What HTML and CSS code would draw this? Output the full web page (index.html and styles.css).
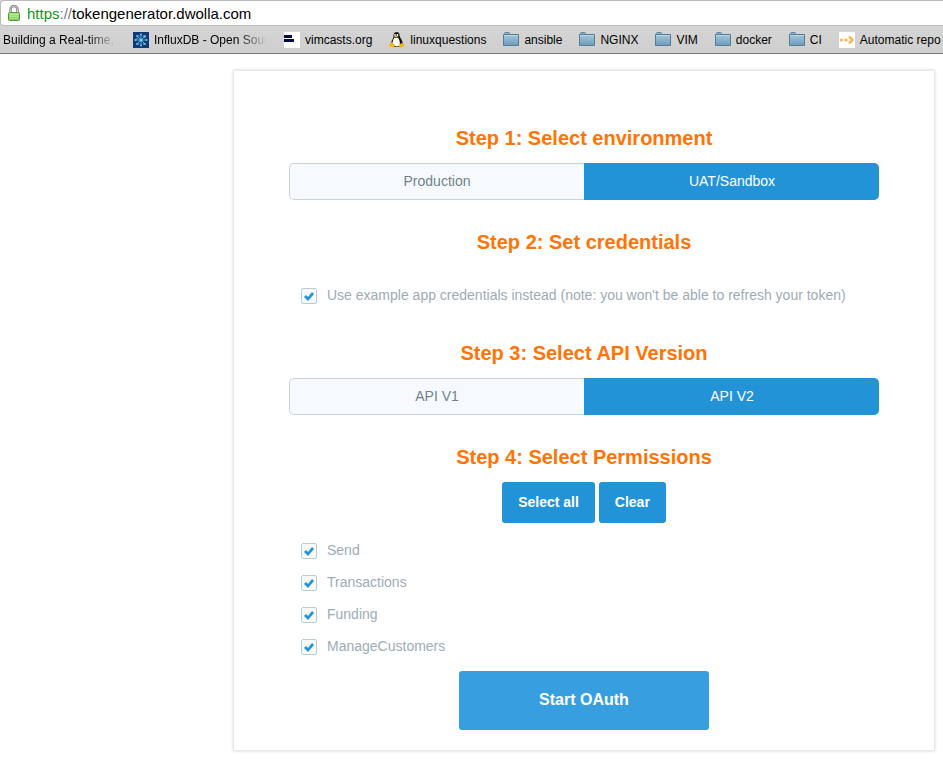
FILE: index.html
```html
<!DOCTYPE html>
<html lang="en">
<head>
<meta charset="utf-8">
<title>Token Generator</title>
<link rel="stylesheet" href="styles.css">
</head>
<body>
<svg class="defs" aria-hidden="true">
  <defs>
    <linearGradient id="folder-fill" x1="0" y1="0" x2="0" y2="1">
      <stop offset="0" stop-color="#a3c6dc"/>
      <stop offset="1" stop-color="#6f9dbb"/>
    </linearGradient>
    <linearGradient id="lock-fill" x1="0" y1="0" x2="0" y2="1">
      <stop offset="0" stop-color="#b4e68c"/>
      <stop offset="1" stop-color="#7fc852"/>
    </linearGradient>
    <symbol id="folder" viewBox="0 0 16 16">
      <path d="M1.500 3V1.500q0-1 1-1h3q1 0 1 1V3" fill="#8fb5cd" stroke="#5d8199"/>
      <path d="M.5 2.500h15v11H.5z" fill="url(#folder-fill)" stroke="#557c95"/>
      <path d="M1 3.500h14" stroke="#bcd7e6"/>
    </symbol>
  </defs>
</svg>
<header class="browser">
  <div class="address">
    <svg class="lock" viewBox="0 0 12 16" aria-hidden="true">
      <path d="M2.500 8V4.500a3.500 3.500 0 0 1 7 0V8" fill="none" stroke="#777" stroke-width="2.400"/>
      <path d="M2.500 8V4.500a3.500 3.500 0 0 1 7 0V8" fill="none" stroke="#d2d2d2"/>
      <rect x=".5" y="7.500" width="11" height="8" rx="1" fill="url(#lock-fill)" stroke="#549642"/>
      <path d="M2 9.500h8M2 11.500h8M2 13.500h8" stroke="#c3eca3" stroke-width=".6"/>
    </svg>
    <span class="url"><span class="secure">https</span><span class="slashes">://</span>tokengenerator.dwolla.com</span>
  </div>
  <nav class="bookmarks" aria-label="Bookmarks">
    <a class="bookmark" href="#"><span class="fade">Building a Real-time,</span></a>
    <a class="bookmark" href="#">
      <svg class="icon" viewBox="0 0 16 16" aria-hidden="true">
        <path fill="#133a78" d="M0 0h16v16H0z"/>
        <path d="M8 8V2M8 8v6M8 8H2M8 8h6M8 8l4 4M8 8l4-4M8 8 4 4M8 8l-4 4M5 6 3 7M11 6l2-1M10 11l1 2M6 11l-1 2M6 5V3M10 5l1-2" stroke="#69bedf" stroke-width=".8" fill="none"/>
        <g fill="#78d0ec"><circle cx="8" cy="8" r="1.500"/><circle cx="8" cy="2.500" r=".9"/><circle cx="8" cy="13.500" r=".9"/><circle cx="2.500" cy="8" r=".9"/><circle cx="13.500" cy="8" r=".9"/><circle cx="4" cy="4" r=".9"/><circle cx="12" cy="4" r=".9"/><circle cx="4" cy="12" r=".9"/><circle cx="12" cy="12" r=".9"/></g>
      </svg>
      <span class="fade">InfluxDB - Open Sour</span></a>
    <a class="bookmark" href="#">
      <svg class="icon" viewBox="0 0 16 16" aria-hidden="true"><path fill="#fff" d="M0 0h16v16H0z"/><path fill="#030b49" d="M0 3h8v3H0zM0 7h10v3H0z"/></svg>
      <span>vimcasts.org</span></a>
    <a class="bookmark" href="#">
      <svg class="icon" viewBox="0 0 16 16" aria-hidden="true">
        <path fill="#111" d="M4.500 2.500Q5 0 7.500 0q3 0 3 3 0 2 2 4.500 1.500 2.500 1 5L10 15H5l-3-3q0-3 1.500-4.500 1.500-2 1-5z"/>
        <path fill="#fff" d="M5.500 5.500q2 1 3.500 0 2.500 3.500 2 8-3 2-6 0L3.500 11q0-3 2-5.500z"/>
        <circle cx="6" cy="3" r=".9" fill="#fff"/><circle cx="8.500" cy="3" r=".9" fill="#fff"/>
        <path fill="#f3b414" d="M5 4.500 7.200 3.500l2 1-2 1.300zM.5 11.500l2.500-1.500 3 3.500-1 2L.5 14.500zM10 12.500l3-1.500 2.500 1.500-.5 1.500-3 1.500H10z"/>
      </svg>
      <span>linuxquestions</span></a>
    <a class="bookmark" href="#"><svg class="icon" aria-hidden="true"><use href="#folder"/></svg><span>ansible</span></a>
    <a class="bookmark" href="#"><svg class="icon" aria-hidden="true"><use href="#folder"/></svg><span>NGINX</span></a>
    <a class="bookmark" href="#"><svg class="icon" aria-hidden="true"><use href="#folder"/></svg><span>VIM</span></a>
    <a class="bookmark" href="#"><svg class="icon" aria-hidden="true"><use href="#folder"/></svg><span>docker</span></a>
    <a class="bookmark" href="#"><svg class="icon" aria-hidden="true"><use href="#folder"/></svg><span>CI</span></a>
    <a class="bookmark" href="#">
      <svg class="icon" viewBox="0 0 16 16" aria-hidden="true"><path fill="#fff" d="M0 0h16v16H0z"/><circle cx="2.500" cy="8" r="1.600" fill="#fab143"/><circle cx="7" cy="8" r="1.600" fill="#fab143"/><path d="m10 4.500 3.500 3.500-3.500 3.500" fill="none" stroke="#fab143" stroke-width="2.400"/></svg>
      <span>Automatic repo</span></a>
  </nav>
</header>
<main class="card">
  <section class="step">
    <h2>Step 1: Select environment</h2>
    <div class="segmented">
      <button type="button" aria-pressed="false">Production</button>
      <button type="button" aria-pressed="true">UAT/Sandbox</button>
    </div>
  </section>
  <section class="step credentials">
    <h2>Step 2: Set credentials</h2>
    <label class="check"><input type="checkbox" checked><span>Use example app credentials instead (note: you won't be able to refresh your token)</span></label>
  </section>
  <section class="step">
    <h2>Step 3: Select API Version</h2>
    <div class="segmented">
      <button type="button" aria-pressed="false">API V1</button>
      <button type="button" aria-pressed="true">API V2</button>
    </div>
  </section>
  <section class="permissions">
    <h2>Step 4: Select Permissions</h2>
    <div class="actions">
      <button type="button" class="button">Select all</button>
      <button type="button" class="button">Clear</button>
    </div>
    <label class="check"><input type="checkbox" checked><span>Send</span></label>
    <label class="check"><input type="checkbox" checked><span>Transactions</span></label>
    <label class="check"><input type="checkbox" checked><span>Funding</span></label>
    <label class="check"><input type="checkbox" checked><span>ManageCustomers</span></label>
  </section>
  <button type="button" class="button start">Start OAuth</button>
</main>
</body>
</html>
```
FILE: styles.css
```css
* {
  box-sizing: border-box;
}

body {
  margin: 0;
  background: #fff;
  font-family: "Liberation Sans", Arial, sans-serif;
  font-size: 14px;
  overflow-x: hidden;
}

button {
  font-family: inherit;
  cursor: pointer;
}

.defs {
  position: absolute;
  width: 0;
  height: 0;
}

/* Browser bars */
.browser {
  background: linear-gradient(#dadada, #cfcfcf);
  border-bottom: 1px solid #777;
}

.address {
  display: flex;
  align-items: center;
  gap: 7px;
  height: 26px;
  padding-left: 7px;
  background: #fff;
  border: 1px solid #b9bcb9;
  border-right: 0;
  border-radius: 4px 0 0 4px;
}

.lock {
  width: 12px;
  height: 16px;
}

.url {
  font-size: 15px;
  color: #000;
}

.secure {
  color: #0a9a1c;
}

.slashes {
  color: #777;
}

.bookmarks {
  display: flex;
  align-items: center;
  gap: 17px;
  height: 27px;
  padding-left: 3px;
}

.bookmark {
  display: flex;
  flex: none;
  align-items: center;
  gap: 5px;
  font-size: 12px;
  color: #000;
  text-decoration: none;
  white-space: nowrap;
}

.icon {
  flex: none;
  width: 16px;
  height: 16px;
}

.fade {
  width: 113px;
  mask-image: linear-gradient(to right, #000 75%, transparent);
}

/* Form card */
.card {
  display: flex;
  flex-direction: column;
  max-width: 700px;
  margin: 17px 9px 9px auto;
  padding: 55px 55px 20px;
  background: #fff;
  box-shadow: 0 0 3px 1px #d5dadb;
}

h2 {
  margin: 0 0 13px;
  font-size: 20px;
  line-height: 24px;
  text-align: center;
  color: #ff7404;
}

.step {
  margin-bottom: 30px;
}

.credentials {
  margin-bottom: 29px;
}

.credentials .check {
  margin-top: 26px;
}

.segmented {
  display: grid;
  grid-template-columns: 1fr 1fr;
}

.segmented button {
  height: 37px;
  padding: 0 0 2px;
  border: 1px solid #c9d4da;
  border-right: 0;
  border-radius: 5px 0 0 5px;
  background: #f7fafd;
  color: #71828e;
  font-size: 14px;
}

.segmented button[aria-pressed="true"] {
  border-color: #2393d7;
  border-radius: 0 5px 5px 0;
  background: #2393d7;
  color: #fff;
}

.check {
  display: flex;
  align-items: center;
  gap: 10px;
  min-height: 32px;
  padding-left: 12px;
  color: #9dacb7;
}

.check span {
  padding-bottom: 2px;
}

.check input {
  appearance: none;
  flex: none;
  width: 16px;
  height: 16px;
  margin: 0;
  border: 1px solid #bccbd3;
  border-radius: 2px;
  background: #f7fafd;
}

.check input:checked::before {
  content: "";
  display: block;
  height: 14px;
  background: #2393d7;
  clip-path: polygon(2px 8px, 4px 6px, 6px 8px, 10px 3px, 12px 5px, 6px 12px);
}

.actions {
  display: flex;
  justify-content: center;
  gap: 4px;
  margin-bottom: 12px;
}

.button {
  height: 41px;
  padding: 0 16px 2px;
  border: 0;
  border-radius: 3px;
  background: #2393d7;
  color: #fff;
  font-size: 14px;
  font-weight: bold;
}

.start {
  align-self: center;
  height: 59px;
  margin-top: 8px;
  padding: 0 80px 2px;
  background: #379fe0;
  font-size: 16px;
}
```
